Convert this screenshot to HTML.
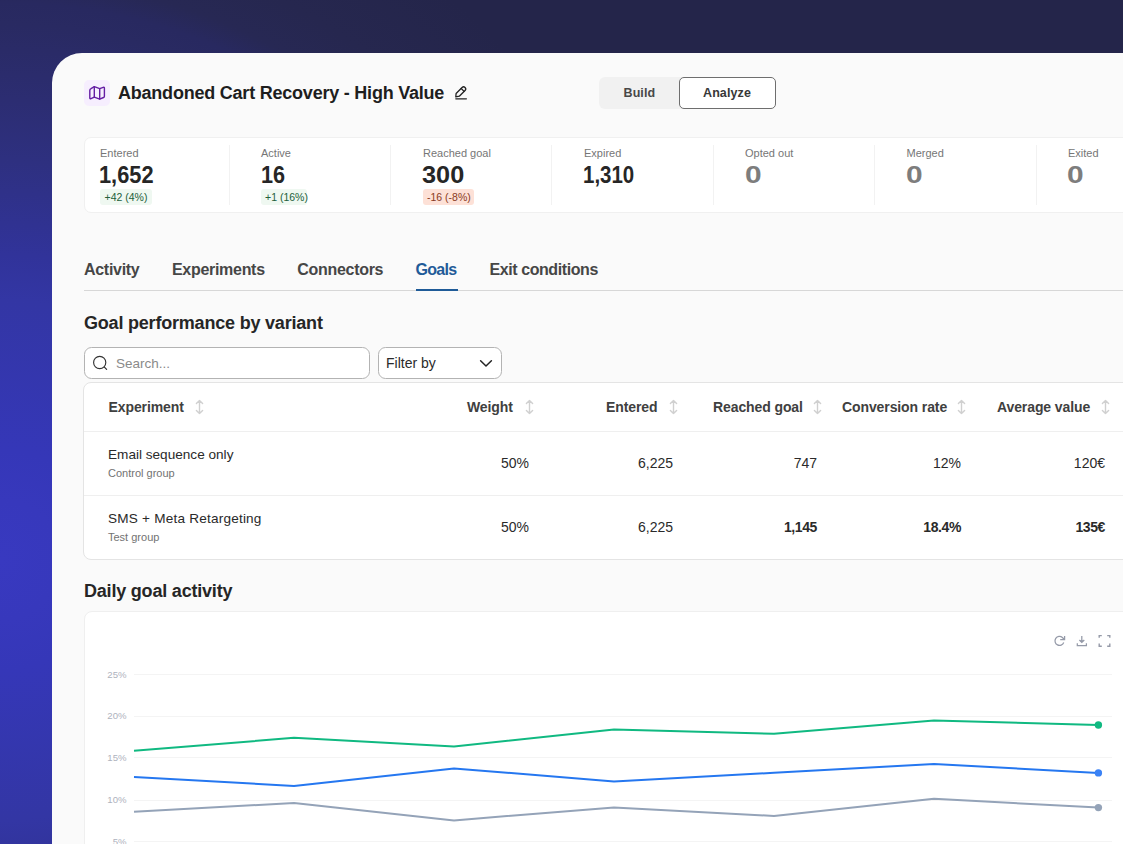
<!DOCTYPE html>
<html><head><meta charset="utf-8">
<style>
*{box-sizing:border-box;margin:0;padding:0}
html,body{width:1123px;height:844px;overflow:hidden}
body{position:relative;font-family:"Liberation Sans",sans-serif;background:#24254a;
 background:radial-gradient(circle at 0px 560px,#3839c0 0px,#3738bc 60px,#3537b8 110px,#3336a4 260px,#31339a 305px,#2e3080 400px,#2c2d72 460px,#292a62 536px,#282960 557px,#272854 582px,#26274f 626px,#24254a 720px);}
.a{position:absolute;white-space:nowrap;line-height:1}
#card{position:absolute;left:52px;top:53px;width:1200px;height:900px;background:#fafafa;border-radius:30px 0 0 0}
.icobox{position:absolute;left:84px;top:80px;width:26px;height:26px;border-radius:5px;background:#f6eefe}
.title{left:118px;top:83.7px;font-size:18px;font-weight:700;color:#1e1e1e;letter-spacing:-0.22px}
.toggle{position:absolute;left:599px;top:77px;width:177px;height:32px;border-radius:6px;background:#f1f1f1}
.anbtn{position:absolute;left:679px;top:77px;width:97px;height:32px;border-radius:5px;background:#fff;border:1px solid #6e6e6e}
.tg{font-size:12.5px;font-weight:700;color:#484848;letter-spacing:0.1px}
.stats{position:absolute;left:84px;top:137px;width:1100px;height:76px;border-radius:7px;background:#fff;border:1px solid #f0f0f0}
.div{position:absolute;top:145px;width:1px;height:60px;background:#f2f2f2}
.lab{font-size:11px;color:#767676;top:147.7px}
.val{font-size:23px;font-weight:700;color:#262626;top:164.2px;transform-origin:0 0}
.val.z{color:#7d7d7d}
.badge{position:absolute;top:189px;height:16px;border-radius:3px}
.bt{font-size:10.5px;top:192px}
.tab{font-size:16px;font-weight:700;color:#464646;top:261.5px;letter-spacing:-0.3px}
.tabline{position:absolute;left:84px;top:290px;width:1100px;height:1px;background:#d7d7d7}
.h2{font-size:18px;font-weight:700;color:#262626;letter-spacing:-0.2px}
.inp{position:absolute;top:347px;height:32px;border-radius:7.5px;background:#fff;border:1px solid #b3b3b3}
.tcard{position:absolute;left:83px;top:382px;width:1100px;height:178px;border-radius:8px;background:#fff;border:1px solid #e4e4e4}
.hline{position:absolute;left:84px;width:1100px;height:1px;background:#efefef}
.th{font-size:14px;font-weight:700;color:#404040;top:400.1px;letter-spacing:-0.1px}
.td{font-size:14px;color:#2a2a2a}
.tb{font-weight:700;letter-spacing:-0.4px}
.sub{font-size:11px;color:#727272}
.ccard{position:absolute;left:84px;top:611px;width:1100px;height:300px;border-radius:8px;background:#fff;border:1px solid #efefef}
.ax{font-size:9.6px;color:#aeb2bd;text-align:right;width:30px}
</style></head><body>
<div id="card"></div>
<div class="icobox"></div>
<svg class="a" style="left:0;top:0" width="1123" height="844" viewBox="0 0 1123 844">
 <g fill="none" stroke="#641ca3" stroke-width="1.4" stroke-linecap="round" stroke-linejoin="round">
  <path d="M89.8 90.5Q89.8 89.2 91 88.6L94.3 86.6L99.7 88.7L103.2 87.3Q104.4 86.9 104.4 88.1V96.2Q104.4 97.1 103.5 97.5L99.7 99.1L94.3 97.1L91 98.6Q89.8 99.1 89.8 97.9Z"/>
  <path d="M94.3 86.6V97.1M99.7 88.7V99.1"/>
 </g>
</svg>
<div class="a title">Abandoned Cart Recovery - High Value</div>
<svg class="a" style="left:450px;top:80px" width="22" height="24" viewBox="450 80 22 24">
 <g fill="none" stroke="#222" stroke-width="1.3" stroke-linecap="round" stroke-linejoin="round">
  <path d="M456.1 93.5L462.1 87.5A2.08 2.08 0 0 1 465.05 90.45L459.3 96.2L455.8 96.8Z"/>
  <path d="M461.2 88.5L464.1 91.4"/>
  <path d="M455.8 98.8 H466.4"/>
 </g>
</svg>
<div class="toggle"></div>
<div class="anbtn"></div>
<div class="a tg" style="left:623.5px;top:86.5px">Build</div>
<div class="a tg" style="left:703px;top:86.5px;color:#383838">Analyze</div>

<div class="stats"></div>
<div class="div" style="left:229px"></div>
<div class="div" style="left:390px"></div>
<div class="div" style="left:551px"></div>
<div class="div" style="left:713px"></div>
<div class="div" style="left:874px"></div>
<div class="div" style="left:1036px"></div>
<div class="a lab" style="left:100px">Entered</div>
<div class="a lab" style="left:261px">Active</div>
<div class="a lab" style="left:423px">Reached goal</div>
<div class="a lab" style="left:584px">Expired</div>
<div class="a lab" style="left:745px">Opted out</div>
<div class="a lab" style="left:906.5px">Merged</div>
<div class="a lab" style="left:1068px">Exited</div>
<div class="a val" style="left:99px;transform:scaleX(0.947)">1,652</div>
<div class="a val" style="left:260.5px;transform:scaleX(0.94)">16</div>
<div class="a val" style="left:422px;transform:scaleX(1.1)">300</div>
<div class="a val" style="left:583px;transform:scaleX(0.89)">1,310</div>
<div class="a val z" style="left:744.5px;transform:scaleX(1.3)">0</div>
<div class="a val z" style="left:905.5px;transform:scaleX(1.3)">0</div>
<div class="a val z" style="left:1067px;transform:scaleX(1.3)">0</div>
<div class="badge" style="left:100px;width:52px;background:#eff8f1"></div>
<div class="a bt" style="left:104.5px;color:#22603a">+42 (4%)</div>
<div class="badge" style="left:261px;width:46px;background:#eff8f1"></div>
<div class="a bt" style="left:265px;color:#22603a">+1 (16%)</div>
<div class="badge" style="left:423px;width:51px;background:#fde1d7"></div>
<div class="a bt" style="left:427px;color:#8a3a22">-16 (-8%)</div>

<div class="a tab" style="left:84px">Activity</div>
<div class="a tab" style="left:172px">Experiments</div>
<div class="a tab" style="left:297.3px">Connectors</div>
<div class="a tab" style="left:415.5px;color:#1f5b98;letter-spacing:-0.7px">Goals</div>
<div class="a tab" style="left:489.5px;letter-spacing:-0.42px">Exit conditions</div>
<div class="tabline"></div>
<div style="position:absolute;left:416px;top:289px;width:42px;height:2px;background:#1f5b98"></div>

<div class="a h2" style="left:84px;top:314.1px">Goal performance by variant</div>
<div class="inp" style="left:84px;width:286px"></div>
<div class="inp" style="left:378px;width:124px"></div>
<svg class="a" style="left:0;top:0" width="1123" height="844" viewBox="0 0 1123 844">
 <circle cx="99.7" cy="362.5" r="6.1" fill="none" stroke="#333" stroke-width="1.15"/>
 <path d="M104.4 367.2 L106.6 369.4" stroke="#333" stroke-width="1.2" stroke-linecap="round"/>
 <path d="M480.6 360.8 L486 366 L491.4 360.8" fill="none" stroke="#222" stroke-width="1.5" stroke-linecap="round" stroke-linejoin="round"/>
</svg>
<div class="a" style="left:116px;top:356.5px;font-size:13.5px;color:#8a8a8a">Search...</div>
<div class="a" style="left:386px;top:356px;font-size:14px;color:#2a2a2a">Filter by</div>

<div class="tcard"></div>
<div class="hline" style="top:431px"></div>
<div class="hline" style="top:495px"></div>
<div class="a th" style="left:108.5px">Experiment</div>
<div class="a th" style="left:467px">Weight</div>
<div class="a th" style="left:606px">Entered</div>
<div class="a th" style="left:713px">Reached goal</div>
<div class="a th" style="left:842px">Conversion rate</div>
<div class="a th" style="left:997px">Average value</div>
<svg class="a" style="left:0;top:0" width="1123" height="844" viewBox="0 0 1123 844">
 <g fill="none" stroke="#d0d0d0" stroke-width="1.4" stroke-linecap="round" stroke-linejoin="round">
  <path d="M199.5 400.6V413.5M196.4 403.6L199.5 400.5L202.6 403.6M196.4 410.5L199.5 413.6L202.6 410.5"/>
  <path d="M529.5 400.6V413.5M526.4 403.6L529.5 400.5L532.6 403.6M526.4 410.5L529.5 413.6L532.6 410.5"/>
  <path d="M673.5 400.6V413.5M670.4 403.6L673.5 400.5L676.6 403.6M670.4 410.5L673.5 413.6L676.6 410.5"/>
  <path d="M817.5 400.6V413.5M814.4 403.6L817.5 400.5L820.6 403.6M814.4 410.5L817.5 413.6L820.6 410.5"/>
  <path d="M961.5 400.6V413.5M958.4 403.6L961.5 400.5L964.6 403.6M958.4 410.5L961.5 413.6L964.6 410.5"/>
  <path d="M1105.5 400.6V413.5M1102.4 403.6L1105.5 400.5L1108.6 403.6M1102.4 410.5L1105.5 413.6L1108.6 410.5"/>
 </g>
</svg>
<div class="a td" style="left:108px;top:448.4px;font-size:13.6px">Email sequence only</div>
<div class="a sub" style="left:108px;top:467.7px">Control group</div>
<div class="a td" style="left:108px;top:512.4px;font-size:13.6px;letter-spacing:0.2px">SMS + Meta Retargeting</div>
<div class="a sub" style="left:108px;top:531.7px">Test group</div>

<div class="a td" style="right:594px;top:456.3px">50%</div>
<div class="a td" style="right:450px;top:456.3px">6,225</div>
<div class="a td" style="right:306px;top:456.3px">747</div>
<div class="a td" style="right:162px;top:456.3px">12%</div>
<div class="a td" style="right:18px;top:456.3px">120€</div>
<div class="a td" style="right:594px;top:520px">50%</div>
<div class="a td" style="right:450px;top:520px">6,225</div>
<div class="a td tb" style="right:306px;top:520px">1,145</div>
<div class="a td tb" style="right:162px;top:520px">18.4%</div>
<div class="a td tb" style="right:18px;top:520px">135€</div>

<div class="a h2" style="left:84px;top:581.6px">Daily goal activity</div>
<div class="ccard"></div>
<svg class="a" style="left:0;top:0" width="1123" height="844" viewBox="0 0 1123 844">
 <g stroke="#f4f4f4" stroke-width="1">
  <path d="M134 674.5H1112M134 716.5H1112M134 757.5H1112M134 800.5H1112M134 841.5H1112"/>
 </g>
 <polyline points="134,750.8 294,737.8 454,746.6 614,729.4 774,733.7 934,720.4 1098.2,725" fill="none" stroke="#10b981" stroke-width="2" stroke-linejoin="round"/>
 <polyline points="134,777 294,785.9 454,768.5 614,781.4 774,772.8 934,764 1098.2,772.9" fill="none" stroke="#2577f0" stroke-width="2" stroke-linejoin="round"/>
 <polyline points="134,811.8 294,803 454,820.4 614,807.4 774,816 934,798.7 1098.2,807.6" fill="none" stroke="#94a3b8" stroke-width="2" stroke-linejoin="round"/>
 <circle cx="1098.4" cy="725" r="3.7" fill="#10b981"/>
 <circle cx="1098.4" cy="772.9" r="3.7" fill="#3a82f5"/>
 <circle cx="1098.4" cy="807.6" r="3.7" fill="#94a3b8"/>
 <g fill="none" stroke="#959aa8" stroke-width="1.25">
  <path d="M1063.73 642.44A4.5 4.5 0 1 1 1062.39 637.45L1064.4 639.5"/><path d="M1060.2 639.6H1064.6V636.1"/>
  <path d="M1081.8 635.9V642M1079.4 640L1081.8 642.4L1084.3 640"/><path d="M1077.3 643.2V645.5H1086.4V643.2"/>
  <path d="M1101.8 635.6H1099.2V637.8M1107.2 635.6H1109.8V637.8M1109.8 643.4V646.3H1107.2M1101.8 646.3H1099.2V643.4" stroke-width="1.4"/>
 </g>
 <path d="M1079.8 640.3L1081.8 642.5L1083.9 640.3Z" fill="#959aa8"/>
</svg>
<div class="a ax" style="left:96.5px;top:669.5px">25%</div>
<div class="a ax" style="left:96.5px;top:711px">20%</div>
<div class="a ax" style="left:96.5px;top:752.5px">15%</div>
<div class="a ax" style="left:96.5px;top:794.5px">10%</div>
<div class="a ax" style="left:96.5px;top:836.5px">5%</div>
</body></html>
